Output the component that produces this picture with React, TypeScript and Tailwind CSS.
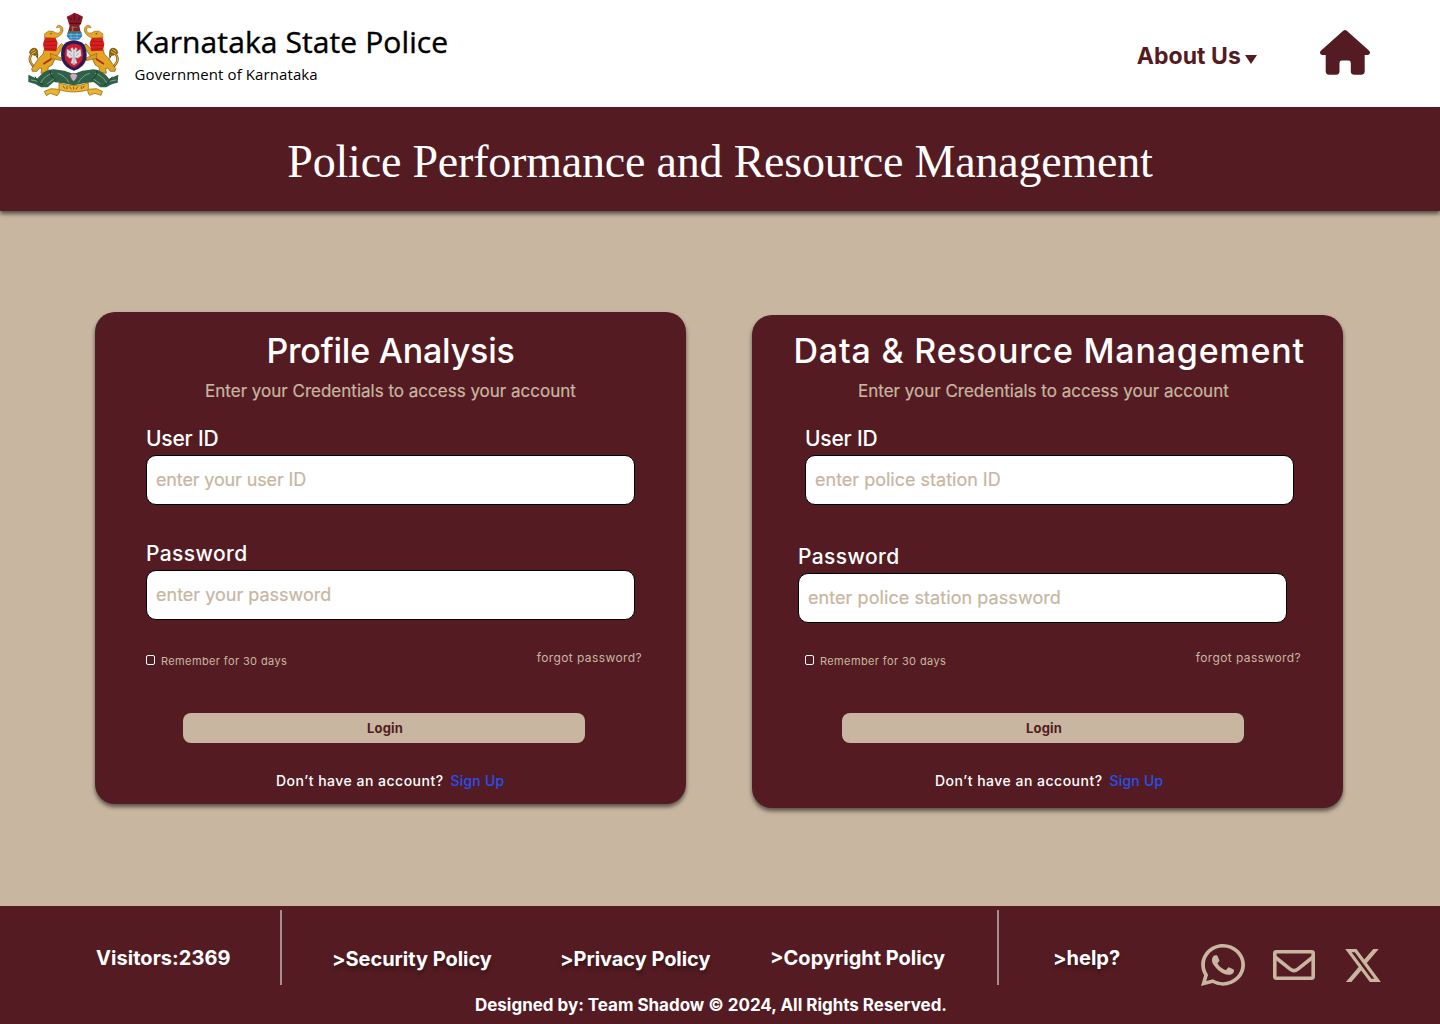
import { FaWhatsapp, FaXTwitter } from "react-icons/fa6";

function Lion() {
  return (
    <g>
      {/* tail */}
      <path d="M106 203 C90 194 84 178 92 165 C96 158 106 160 110 167 C112 154 98 150 90 156" fill="none" stroke="#5d4311" strokeWidth="7" />
      <path d="M106 203 C90 194 84 178 92 165 C96 158 106 160 110 167" fill="none" stroke="#e0a526" strokeWidth="4" />
      <path d="M86 160 q2 -17 18 -17 q13 5 8 20 q-9 8 -16 1 z" fill="#8a6418" />
      <path d="M92 156 l12 -8 M94 162 l14 -8" stroke="#f0b834" strokeWidth="3" />
      {/* body and legs */}
      <path d="M132 148 L170 146 L183 131 L190 136 L176 160 L164 176 L156 194 L144 202 L142 218 L122 220 L124 206 L118 204 L110 214 L96 214 L94 206 L102 194 L114 176 L128 162 Z" fill="#e3a323" stroke="#7b5313" strokeWidth="2" />
      <path d="M150 160 l34 14 l-2 8 l-30 -7 z" fill="#dd9c20" stroke="#7b5313" strokeWidth="1.5" />
      <path d="M128 190 l24 -16 l2 5 l-24 15 z" fill="#a42b1c" />
      {/* mane */}
      <path d="M134 112 L163 108 L172 128 L168 154 L132 152 L128 132 Z" fill="#d8201d" />
      <path d="M132 126 l36 -3 M130 136 l40 0 M134 146 l32 2" stroke="#8f1518" strokeWidth="2" />
      {/* head with raised trunk */}
      <path d="M132 113 L133 101 L145 93 L158 94 L167 99 Q183 101 181 86 Q178 80 168 83 Q171 73 181 77 Q190 82 188 93 Q184 108 164 114 Z" fill="#e5a727" stroke="#7b5313" strokeWidth="1.5" />
      <circle cx="152" cy="101" r="2" fill="#4a2d0a" />
    </g>
  );
}

function Emblem() {
  return (
    <svg viewBox="80 36 276 258" className="h-[86px] w-[92px]" aria-label="Emblem">
      <Lion />
      <g transform="translate(440 0) scale(-1 1)">
        <Lion />
      </g>
      {/* foliage base */}
      <path d="M84 224 L110 236 Q134 208 160 208 L192 212 L220 222 L246 212 L280 208 Q306 210 326 236 L354 224 L352 248 Q330 252 318 262 L300 262 L280 246 L252 250 L220 256 L188 250 L160 246 L142 262 L122 262 Q106 250 84 246 Z" fill="#2f6149" />
      <path d="M92 240 l22 4 M120 250 q14 -24 36 -30 M140 252 l22 -16 M172 220 q22 6 34 28 M348 240 l-22 4 M320 250 q-14 -24 -36 -30 M300 252 l-22 -16 M268 220 q-22 6 -34 28" fill="none" stroke="#9dc3a4" strokeWidth="2" />
      <path d="M104 230 q12 22 24 24 M150 212 q-2 16 16 28 M336 230 q-12 22 -24 24 M290 212 q2 16 -16 28" fill="none" stroke="#173d2b" strokeWidth="3" />
      <path d="M208 226 q12 -12 24 0 q-4 14 -12 18 q-8 -4 -12 -18 z" fill="#c3b2bd" stroke="#6d3f5c" strokeWidth="2" />
      {/* shield */}
      <path d="M192 132 Q220 110 250 132 Q262 150 258 178 Q250 204 221 212 Q194 204 184 180 Q178 148 192 132 Z" fill="#2a1a58" />
      <path d="M200 138 Q220 124 242 138 Q251 156 246 178 Q238 196 221 203 Q202 196 194 178 Q190 154 200 138 Z" fill="#cf1b2b" />
      {/* two-headed bird */}
      <path d="M216 142 l5 8 l5 -8 l5 5 l-4 8 l14 -8 l2 20 l-10 8 l-8 -2 l6 16 l-10 6 l-10 -6 l5 -16 l-8 2 l-9 -8 l1 -20 l14 8 l-4 -8 z" fill="#dedde4" stroke="#8c7a8c" strokeWidth="1.5" />
      <path d="M221 152 v36 M206 158 l8 10 M236 158 l-8 10 M215 190 h12" stroke="#827486" strokeWidth="1.5" />
      {/* capital */}
      <path d="M202 96 L243 96 L246 108 L236 119 L208 119 L199 108 Z" fill="#2f80b2" />
      <path d="M200 104 h44 M206 112 h32 M212 98 v20 M230 98 v20" stroke="#86c6df" strokeWidth="2" />
      <path d="M206 72 L199 50 L212 44 L222 38 L234 43 L248 50 L242 72 L237 77 L241 97 L203 97 L208 77 Z" fill="#861a29" />
      <path d="M207 52 l8 8 M222 44 v16 M239 50 l-6 12 M206 70 h36" stroke="#4d0d19" strokeWidth="3" />
      <path d="M204 95 h36 M213 82 h18" stroke="#3b7a54" strokeWidth="4" />
      <path d="M217 78 v16" stroke="#cf5236" strokeWidth="5" />
      {/* motto ribbon */}
      <path d="M132 274 L152 266 L176 268 L176 249 Q220 264 264 249 L264 268 L288 266 L306 274 L302 286 L284 280 L268 286 Q262 280 262 270 Q220 282 178 270 Q178 282 170 287 L150 280 L138 287 Z" fill="#efb42b" stroke="#80570f" strokeWidth="2" />
      <path d="M188 258 l6 8 M200 259 v9 M208 260 l5 8 M220 260 v9 M232 260 l-5 8 M243 259 v8 M252 257 l-4 8" stroke="#6b4310" strokeWidth="2.5" />
    </svg>
  );
}

function Envelope({ className }: { className: string }) {
  return (
    <svg viewBox="0 0 42 30" className={className} fill="none" stroke="currentColor" strokeWidth="3.6">
      <rect x="1.8" y="1.8" width="38.4" height="26.4" rx="1.6" />
      <path d="M2 7L17.2 19.2Q21 22.2 24.8 19.2L40 7" />
    </svg>
  );
}

type Field = { label: string; placeholder: string; labelClass: string; textClass: string; className: string };

type CardProps = {
  title: string;
  titleClass: string;
  subtitleClass: string;
  fields: Field[];
  footClass: string;
  className: string;
};

function LoginCard({ title, titleClass, subtitleClass, fields, footClass, className }: CardProps) {
  return (
    <section className={`w-[591px] shrink-0 rounded-[20px] bg-[#541c22] shadow-[0_3px_4px_rgba(0,0,0,0.55)] ${className}`}>
      <h2 className={`leading-[40px] font-medium whitespace-nowrap text-white ${titleClass}`}>{title}</h2>
      <p className={`mt-[8px] text-[17px] leading-[24px] whitespace-nowrap text-[#c8b6a1] [-webkit-text-stroke:0.2px] ${subtitleClass}`}>
        Enter your Credentials to access your account
      </p>
      {fields.map((f) => (
        <label key={f.label} className={`block w-[489px] ${f.className}`}>
          <span className={`block h-[33px] text-[21px] leading-[34px] font-medium text-white ${f.labelClass}`}>{f.label}</span>
          <input
            placeholder={f.placeholder}
            className={`block h-[50px] w-full rounded-[10px] border border-black bg-white pr-[8px] pl-[9px] text-[18px] [-webkit-text-stroke:0.2px] placeholder:text-[#c8b6a1] placeholder:opacity-100 ${f.textClass}`}
          />
        </label>
      ))}
      <div className={`w-[496px] ${footClass}`}>
        <div className="flex items-start justify-between">
          <label className="mt-[3px] flex items-center text-[11px] leading-[16px] tracking-[0.38px] text-[#c8b6a1]">
            <span className="-mt-[2px] mr-[6px] h-[10px] w-[9px] rounded-[2px] border border-white" />
            Remember for 30 days
          </label>
          <a className="text-[12px] leading-[16px] tracking-[0.4px] text-[#c8b6a1]">forgot password?</a>
        </div>
        <button className="mt-[44.5px] ml-[37px] block h-[30px] w-[402px] rounded-[8px] bg-[#c8b6a1] pt-[1px] pl-[2px] text-center text-[13px] font-bold tracking-[0.15px] text-[#541c22]">
          Login
        </button>
        <p className="mt-[27.5px] ml-[130px] flex text-[14px] leading-[20px] whitespace-nowrap text-white">
          <span className="w-[174.5px] font-medium tracking-[0.49px]">Don’t have an account?</span>
          <a className="font-medium tracking-[0.2px] text-[#2450f0]">Sign Up</a>
        </p>
      </div>
    </section>
  );
}

export default function App() {
  return (
    <div className="flex h-[1024px] w-[1440px] flex-col overflow-hidden bg-[#c8b6a1] font-['Inter',sans-serif]">
      <header className="flex h-[107px] shrink-0 items-start bg-white text-[#541c22]">
        <div className="mt-[12px] ml-[26.5px]">
          <Emblem />
        </div>
        <div className="ml-[16px] w-[320px] font-['Open_Sans',sans-serif] whitespace-nowrap text-black">
          <div className="mt-[22px] text-[30px] leading-[40px] tracking-[0.1px] [-webkit-text-stroke:0.4px]">Karnataka State Police</div>
          <div className="mt-[2px] text-[15px] leading-[20px] tracking-[0.1px]">Government of Karnataka</div>
        </div>
        <nav className="ml-auto flex">
          <a className="mt-[40px] flex text-[23px] leading-[32px] font-bold tracking-[0.08px]">
            About Us
            <svg viewBox="0 0 12 9" className="mt-[15px] ml-[4px] h-[9px] w-[12px]" fill="currentColor">
              <path d="M0 0H12L6 9Z" />
            </svg>
          </a>
          <svg viewBox="0 0 50 45" className="mt-[29.5px] mr-[70px] ml-[63px] h-[45px] w-[50px]" fill="currentColor">
            <path d="M23.2.8Q25-.6 26.8.8L49.2 20.7Q50 21.6 50 22.6Q50 25 47.4 25H44.7V41.3Q44.7 44.7 41.3 44.7H34.2Q30.8 44.7 30.8 41.3V33Q30.8 30.6 28.4 30.6H21.9Q19.5 30.6 19.5 33V41.3Q19.5 44.7 16.1 44.7H9.1Q5.7 44.7 5.7 41.3V25H2.6Q0 25 0 22.6Q0 21.6.8 20.7Z" />
          </svg>
        </nav>
      </header>

      <div className="flex h-[104px] shrink-0 justify-center bg-[#541c22] shadow-[0_3px_4px_rgba(0,0,0,0.55)]">
        <h1 className="mt-[25px] font-['Liberation_Serif',serif] text-[46px] leading-[60px] tracking-[-0.2px] whitespace-nowrap text-white">
          Police Performance and Resource Management
        </h1>
      </div>

      <main className="flex h-[695px] shrink-0 items-start">
        <LoginCard
          title="Profile Analysis"
          className="mt-[101px] ml-[95px] h-[492px] pt-[19px]"
          titleClass="text-center text-[34px] tracking-[-0.2px]"
          subtitleClass="text-center"
          footClass="ml-[51px] mt-[30px]"
          fields={[
            { label: "User ID", placeholder: "enter your user ID", labelClass: "tracking-[-0.2px]", textClass: "tracking-[-0.14px]", className: "mt-[18.5px] ml-[51px]" },
            { label: "Password", placeholder: "enter your password", labelClass: "tracking-[0.4px]", textClass: "", className: "mt-[32px] ml-[51px]" },
          ]}
        />
        <LoginCard
          title="Data & Resource Management"
          className="mt-[104px] ml-[66px] h-[493px] pt-[16px]"
          titleClass="pl-[41.5px] text-[34px] tracking-[0.8px]"
          subtitleClass="pl-[106px]"
          footClass="ml-[53px] mt-[27px]"
          fields={[
            { label: "User ID", placeholder: "enter police station ID", labelClass: "tracking-[-0.2px]", textClass: "", className: "mt-[18.5px] ml-[53px]" },
            { label: "Password", placeholder: "enter police station password", labelClass: "tracking-[0.4px]", textClass: "tracking-[0.07px]", className: "mt-[35px] ml-[46px]" },
          ]}
        />
      </main>

      <footer className="flex h-[118px] shrink-0 flex-col bg-[#541c22] text-white">
        <div className="flex h-[83px] items-start pt-[4px] text-[20px] leading-[32px] font-bold whitespace-nowrap">
          <span className="mt-[32px] ml-[96px] w-[184px] tracking-[0.05px]">Visitors:2369</span>
          <span className="h-[75px] w-[2px] bg-[#a98e91]" />
          <a className="mt-[33px] ml-[50px] w-[228px] tracking-[-0.04px] text-shadow-[0_4px_4px_rgba(0,0,0,0.35)]">&gt;Security Policy</a>
          <a className="mt-[33px] w-[210px] tracking-[-0.05px] text-shadow-[0_4px_4px_rgba(0,0,0,0.35)]">&gt;Privacy Policy</a>
          <a className="mt-[32px] w-[227px]">&gt;Copyright Policy</a>
          <span className="h-[75px] w-[2px] bg-[#a98e91]" />
          <a className="mt-[32px] ml-[54px] w-[148px] text-shadow-[0_4px_4px_rgba(0,0,0,0.35)]">&gt;help?</a>
          <div className="mt-[34px] flex text-[#c8b6a1]">
            <FaWhatsapp viewBox="0 32 448 448" preserveAspectRatio="none" className="h-[42px] w-[44px]" />
            <Envelope className="mt-[6px] ml-[28px] h-[30px] w-[42px]" />
            <FaXTwitter viewBox="24 48 465 416" preserveAspectRatio="none" className="mt-[5px] ml-[30px] h-[33px] w-[36px]" />
          </div>
        </div>
        <p className="mt-[4px] pl-[475px] text-[17px] leading-[24px] font-bold tracking-[-0.02px] whitespace-nowrap">
          Designed by: Team Shadow © 2024, All Rights Reserved.
        </p>
      </footer>
    </div>
  );
}
